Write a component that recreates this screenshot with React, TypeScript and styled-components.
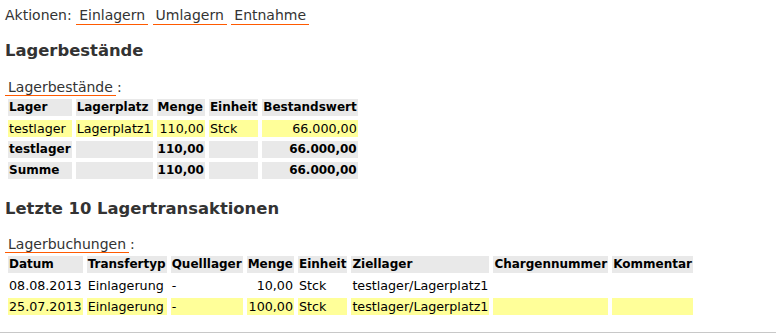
import React from 'react';
import styled, { createGlobalStyle } from 'styled-components';

const GlobalStyle = createGlobalStyle`
  html, body {
    margin: 0;
    padding: 0;
    background: #fff;
  }
  body {
    font-family: "DejaVu Sans", Verdana, sans-serif;
    color: #333;
  }
`;

const Page = styled.div`
  padding: 7px 4px 0;
`;

const Actions = styled.div`
  height: 16px;
  font-size: 14px;
  line-height: 16px;
  padding-left: 1px;
  white-space: nowrap;
`;

const ActionLink = styled.a`
  display: inline-block;
  vertical-align: top;
  color: #333;
  text-decoration: none;
  padding: 0 3px 1px;
  border-bottom: 1px solid #ff5a00;
`;

const Heading = styled.h2<{ $top: number }>`
  font-size: 16.4px;
  line-height: 20px;
  font-weight: bold;
  margin: ${(p) => p.$top}px 0 0 1px;
  color: #333;
`;

const Caption = styled.div<{ $top: number }>`
  font-size: 14px;
  line-height: 16px;
  margin-top: ${(p) => p.$top}px;
  margin-left: 1px;
  color: #333;
`;

const CaptionLabel = styled.span`
  padding: 0 3px;
  margin-right: 1px;
  border-bottom: 1px solid #ff5a00;
`;

const Table = styled.table`
  border-collapse: separate;
  border-spacing: 4px;
  color: #000;
`;

const Th = styled.th`
  background: #e9e9e9;
  font-size: 12px;
  font-weight: bold;
  text-align: left;
  padding: 1px;
  line-height: 15px;
  white-space: nowrap;
`;

type Tone = 'plain' | 'yellow' | 'grey';

const Td = styled.td<{ $tone: Tone; $num?: boolean; $bold?: boolean }>`
  background: ${(p) =>
    p.$tone === 'yellow' ? '#ffff99' : p.$tone === 'grey' ? '#e9e9e9' : 'transparent'};
  text-align: ${(p) => (p.$num ? 'right' : 'left')};
  font-weight: ${(p) => (p.$bold ? 'bold' : 'normal')};
  font-size: ${(p) => (p.$bold ? '12px' : '12.7px')};
  padding: 1px;
  line-height: 15px;
  white-space: nowrap;
`;

const Footer = styled.div`
  margin: 13px -4px 0;
  border-top: 1px solid #c8c8c8;
  height: 4px;
`;

const stockHead = ['Lager', 'Lagerplatz', 'Menge', 'Einheit', 'Bestandswert'];

const stockRows: { cells: string[]; tone: Tone; bold: boolean }[] = [
  { cells: ['testlager', 'Lagerplatz1', '110,00', 'Stck', '66.000,00'], tone: 'yellow', bold: false },
  { cells: ['testlager', '', '110,00', '', '66.000,00'], tone: 'grey', bold: true },
  { cells: ['Summe', '', '110,00', '', '66.000,00'], tone: 'grey', bold: true },
];

const bookHead = [
  'Datum',
  'Transfertyp',
  'Quelllager',
  'Menge',
  'Einheit',
  'Ziellager',
  'Chargennummer',
  'Kommentar',
];

const bookRows: { cells: string[]; tone: Tone }[] = [
  {
    cells: ['08.08.2013', 'Einlagerung', '-', '10,00', 'Stck', 'testlager/Lagerplatz1', '', ''],
    tone: 'plain',
  },
  {
    cells: ['25.07.2013', 'Einlagerung', '-', '100,00', 'Stck', 'testlager/Lagerplatz1', '', ''],
    tone: 'yellow',
  },
];

export default function App() {
  return (
    <>
      <GlobalStyle />
      <Page>
        <Actions>
          Aktionen: <ActionLink href="#">Einlagern</ActionLink>{' '}
          <ActionLink href="#">Umlagern</ActionLink>{' '}
          <ActionLink href="#">Entnahme</ActionLink>
        </Actions>

        <Heading $top={18}>Lagerbestände</Heading>
        <Caption $top={18}>
          <CaptionLabel>Lagerbestände</CaptionLabel>:
        </Caption>
        <Table>
          <thead>
            <tr>
              {stockHead.map((h) => (
                <Th key={h}>{h}</Th>
              ))}
            </tr>
          </thead>
          <tbody>
            {stockRows.map((row, i) => (
              <tr key={i}>
                {row.cells.map((c, j) => (
                  <Td key={j} $tone={row.tone} $bold={row.bold} $num={j === 2 || j === 4}>
                    {c}
                  </Td>
                ))}
              </tr>
            ))}
          </tbody>
        </Table>

        <Heading $top={16}>Letzte 10 Lagertransaktionen</Heading>
        <Caption $top={17}>
          <CaptionLabel>Lagerbuchungen</CaptionLabel>:
        </Caption>
        <Table>
          <thead>
            <tr>
              {bookHead.map((h) => (
                <Th key={h}>{h}</Th>
              ))}
            </tr>
          </thead>
          <tbody>
            {bookRows.map((row, i) => (
              <tr key={i}>
                {row.cells.map((c, j) => (
                  <Td key={j} $tone={row.tone} $num={j === 3}>
                    {c}
                  </Td>
                ))}
              </tr>
            ))}
          </tbody>
        </Table>
        <Footer />
      </Page>
    </>
  );
}
